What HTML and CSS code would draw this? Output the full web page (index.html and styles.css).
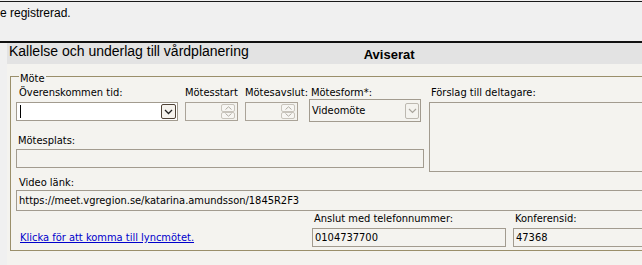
FILE: index.html
```html
<!DOCTYPE html>
<html lang="sv">
<head>
  <meta charset="UTF-8" />
  <title>Kallelse och underlag till vårdplanering</title>
  <link rel="stylesheet" href="styles.css">
</head>
<body>
  <div class="topbar">
    <span class="msg">e registrerad.</span>
  </div>

  <div class="main">
    <div class="panel">
      <div class="header">
        <span class="title">Kallelse och underlag till vårdplanering</span>
        <span class="status">Aviserat</span>
      </div>

      <fieldset class="group">
        <legend>Möte</legend>

        <!-- Tid, form och deltagare -->
        <div class="grid">
          <label class="lbl first">Överenskommen tid:</label>
          <label class="lbl">Mötesstart</label>
          <label class="lbl">Mötesavslut:</label>
          <label class="lbl pad">Mötesform*:</label>
          <label class="lbl">Förslag till deltagare:</label>

          <div class="combo active">
            <span class="caret"></span>
            <span class="drop dark">
              <svg width="9" height="6" viewBox="0 0 9 6"><path d="M1 1 L4.5 4.5 L8 1" fill="none" stroke="#222" stroke-width="1.3"/></svg>
            </span>
          </div>
          <div class="spin">
            <div class="spin-btns">
              <span class="sbtn"><svg width="7" height="4" viewBox="0 0 7 4"><path d="M0.5 3.5 L3.5 0.8 L6.5 3.5" fill="none" stroke="#b0aca4" stroke-width="1"/></svg></span>
              <span class="sbtn"><svg width="7" height="4" viewBox="0 0 7 4"><path d="M0.5 0.5 L3.5 3.2 L6.5 0.5" fill="none" stroke="#b0aca4" stroke-width="1"/></svg></span>
            </div>
          </div>
          <div class="spin">
            <div class="spin-btns">
              <span class="sbtn"><svg width="7" height="4" viewBox="0 0 7 4"><path d="M0.5 3.5 L3.5 0.8 L6.5 3.5" fill="none" stroke="#b0aca4" stroke-width="1"/></svg></span>
              <span class="sbtn"><svg width="7" height="4" viewBox="0 0 7 4"><path d="M0.5 0.5 L3.5 3.2 L6.5 0.5" fill="none" stroke="#b0aca4" stroke-width="1"/></svg></span>
            </div>
          </div>
          <div class="combo form">
            <span class="value">Videomöte</span>
            <span class="drop light">
              <svg width="9" height="6" viewBox="0 0 9 6"><path d="M1 1 L4.5 4.5 L8 1" fill="none" stroke="#a8a49c" stroke-width="1.2"/></svg>
            </span>
          </div>
          <div class="box deltagare"></div>

          <label class="lbl wide place-lbl">Mötesplats:</label>
          <div class="box wide place"></div>
        </div>

        <!-- Video -->
        <label class="lbl video-lbl">Video länk:</label>
        <div class="box video">https://meet.vgregion.se/katarina.amundsson/1845R2F3</div>

        <!-- Uppringning -->
        <div class="dial">
          <div class="link-cell">
            <a href="#" class="lync">Klicka för att komma till lyncmötet.</a>
          </div>
          <div class="phone">
            <label class="lbl">Anslut med telefonnummer:</label>
            <div class="box">0104737700</div>
          </div>
          <div class="conf">
            <label class="lbl">Konferensid:</label>
            <div class="box">47368</div>
          </div>
        </div>
      </fieldset>
    </div>
  </div>
</body>
</html>
```

FILE: styles.css
```css
* {
  box-sizing: border-box;
}
body {
  margin: 0;
  background-color: #f0f0f0;
  font-family: "DejaVu Sans Condensed", "DejaVu Sans", sans-serif;
  font-stretch: condensed;
  font-size: 11px;
  color: #000;
  overflow: hidden;
}
.topbar {
  height: 40px;
  margin-top: 1px;
  border-top: 1px solid #1a1a1a;
  padding-top: 4px;
}
.msg {
  display: block;
  font-family: "Liberation Sans", Arial, sans-serif;
  font-size: 12px;
  line-height: 14px;
}
.main {
  width: 720px;
  border-top: 2px solid #111;
  padding-left: 7px;
}
.panel {
  background-color: #f4f3ef;
  height: 230px;
}
.header {
  display: flex;
  align-items: flex-start;
  height: 21px;
  padding-left: 2px;
  background-color: #e3e3e3;
  font-family: "Liberation Sans", Arial, sans-serif;
}
.title {
  font-size: 14px;
  line-height: 16px;
}
.status {
  margin-left: 115px;
  padding-top: 4px;
  font-size: 13px;
  line-height: 15px;
  font-weight: bold;
}
.group {
  margin: 4px 0 0 3px;
  padding: 0 0 3px 5px;
  border: 1px solid #9a8f6a;
}
.group legend {
  margin-left: 3px;
  padding: 4px 1px 0;
  line-height: 13px;
}
.lbl {
  display: block;
  height: 13px;
  line-height: 13px;
  white-space: nowrap;
}
.first,
.video-lbl {
  padding-left: 3px;
}
.pad {
  padding-left: 2px;
}
.grid {
  display: grid;
  grid-template-columns: 162px 53px 57px 115px 1fr;
  column-gap: 7px;
  margin-top: 1px;
}
.grid > .lbl {
  margin-bottom: 3px;
}
.box {
  height: 19px;
  border: 1px solid #a29b8f;
  padding-left: 2px;
  line-height: 17px;
  white-space: nowrap;
}
.combo {
  display: flex;
  align-items: center;
  height: 19px;
  border: 1px solid #a29b8f;
  padding: 0 1px 0 2px;
}
.combo.active {
  background-color: #fff;
}
.caret {
  width: 1px;
  height: 13px;
  background-color: #000;
  margin-left: 1px;
}
.value {
  line-height: 17px;
}
.drop {
  margin-left: auto;
  width: 15px;
  height: 15px;
  display: flex;
  align-items: center;
  justify-content: center;
}
.drop.dark {
  border: 1px solid #4e4236;
  border-radius: 2px;
  background-color: #f6f3ee;
}
.drop.light {
  border: 1px solid #bcb8b0;
  border-radius: 2px;
  width: 14px;
  height: 16px;
}
.form {
  width: 112px;
  height: 23px;
  margin-top: -3px;
  align-self: end;
}
.spin {
  display: flex;
  justify-content: flex-end;
  width: 53px;
  height: 19px;
  border: 1px solid #aaa398;
  padding: 1px 2px 1px 0;
}
.spin-btns {
  display: flex;
  flex-direction: column;
  width: 14px;
}
.sbtn {
  flex: 1;
  display: flex;
  align-items: center;
  justify-content: center;
  border: 1px solid #c8c4bc;
  border-radius: 2px;
  background-color: #f7f6f3;
}
.deltagare {
  grid-column: 5;
  grid-row: 2 / 5;
  height: 70px;
  margin: 0 0 -4px -2px;
}
.wide {
  grid-column: 1 / 5;
}
.grid > .place-lbl {
  margin-top: 12px;
  margin-bottom: 2px;
  padding-left: 2px;
}
.place {
  width: 408px;
}
.video-lbl {
  margin-top: 8px;
  margin-bottom: 1px;
}
.video {
  height: 21px;
  line-height: 19px;
}
.dial {
  display: flex;
  align-items: flex-end;
  margin-top: 1px;
}
.link-cell {
  width: 296px;
  height: 19px;
  padding-left: 4px;
  line-height: 19px;
}
.lync {
  color: #0000cc;
  text-decoration: underline;
}
.phone {
  width: 194px;
}
.phone .lbl,
.conf .lbl {
  margin: 0 0 3px 2px;
}
.conf {
  flex: 1;
  margin-left: 7px;
}
```
